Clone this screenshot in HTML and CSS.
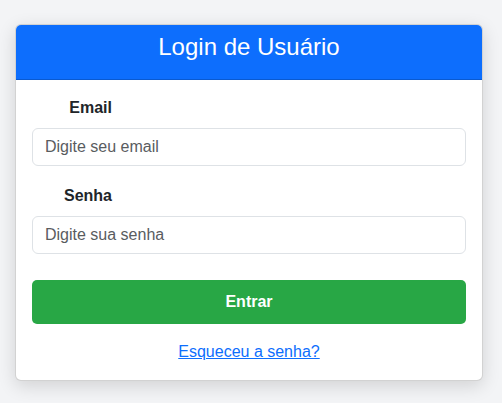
FILE: index.html
```html
<!DOCTYPE html>
<html lang="pt-BR">
<head>
<meta charset="utf-8">
<title>Login de Usuário</title>
<link rel="stylesheet" href="styles.css">
</head>
<body>
<div class="card">
  <div class="card-header">
    <h3 class="title">Login de Usuário</h3>
  </div>
  <form class="card-body">
    <div class="group">
      <label class="label" for="email">Email</label>
      <input class="input" id="email" type="email" placeholder="Digite seu email">
    </div>
    <div class="group">
      <label class="label" for="senha">Senha</label>
      <input class="input" id="senha" type="password" placeholder="Digite sua senha">
    </div>
    <button class="btn" type="button">Entrar</button>
    <div class="forgot"><a href="#">Esqueceu a senha?</a></div>
  </form>
</div>
</body>
</html>
```
FILE: styles.css
```css
* { box-sizing: border-box; }
html, body { margin: 0; }
html { background: #f3f4f6; }
body {
  font-family: "Liberation Sans", Arial, sans-serif;
  font-size: 16px;
  line-height: 1.5;
  color: #212529;
  padding: 24px 0 24px 15px;
}
.card {
  width: 468px;
  background: #fff;
  border: 1px solid rgba(0,0,0,0.175);
  border-radius: 6px;
  box-shadow: 0 5px 18px rgba(0,0,0,0.14);
  overflow: hidden;
}
.card-header {
  background: #0d6efd;
  color: #fff;
  padding: 8px 16px 9px;
  border-bottom: 1px solid rgba(0,0,0,0.175);
  text-align: center;
}
.title {
  margin: 0 0 8px;
  font-size: 24px;
  font-weight: 400;
  line-height: 1.2;
}
.card-body {
  padding: 16px;
  margin: 0;
}
.group { margin-bottom: 18px; }
.group + .group { margin-bottom: 26px; }
.label {
  display: block;
  width: 80px;
  text-align: right;
  font-weight: 700;
  margin-bottom: 8px;
}
.input {
  display: block;
  width: 100%;
  height: 38px;
  padding: 6px 12px;
  font: inherit;
  color: #212529;
  border: 1px solid #dee2e6;
  border-radius: 6px;
  background: #fff;
}
.input::placeholder { color: #595c5f; opacity: 1; }
.btn {
  display: block;
  width: 100%;
  height: 44px;
  background: #28a745;
  color: #fff;
  border: 0;
  border-radius: 5px;
  font: inherit;
  font-weight: 700;
}
.forgot {
  text-align: center;
  margin-top: 16px;
}
.forgot a { color: #0d6efd; text-decoration: underline; }
```
